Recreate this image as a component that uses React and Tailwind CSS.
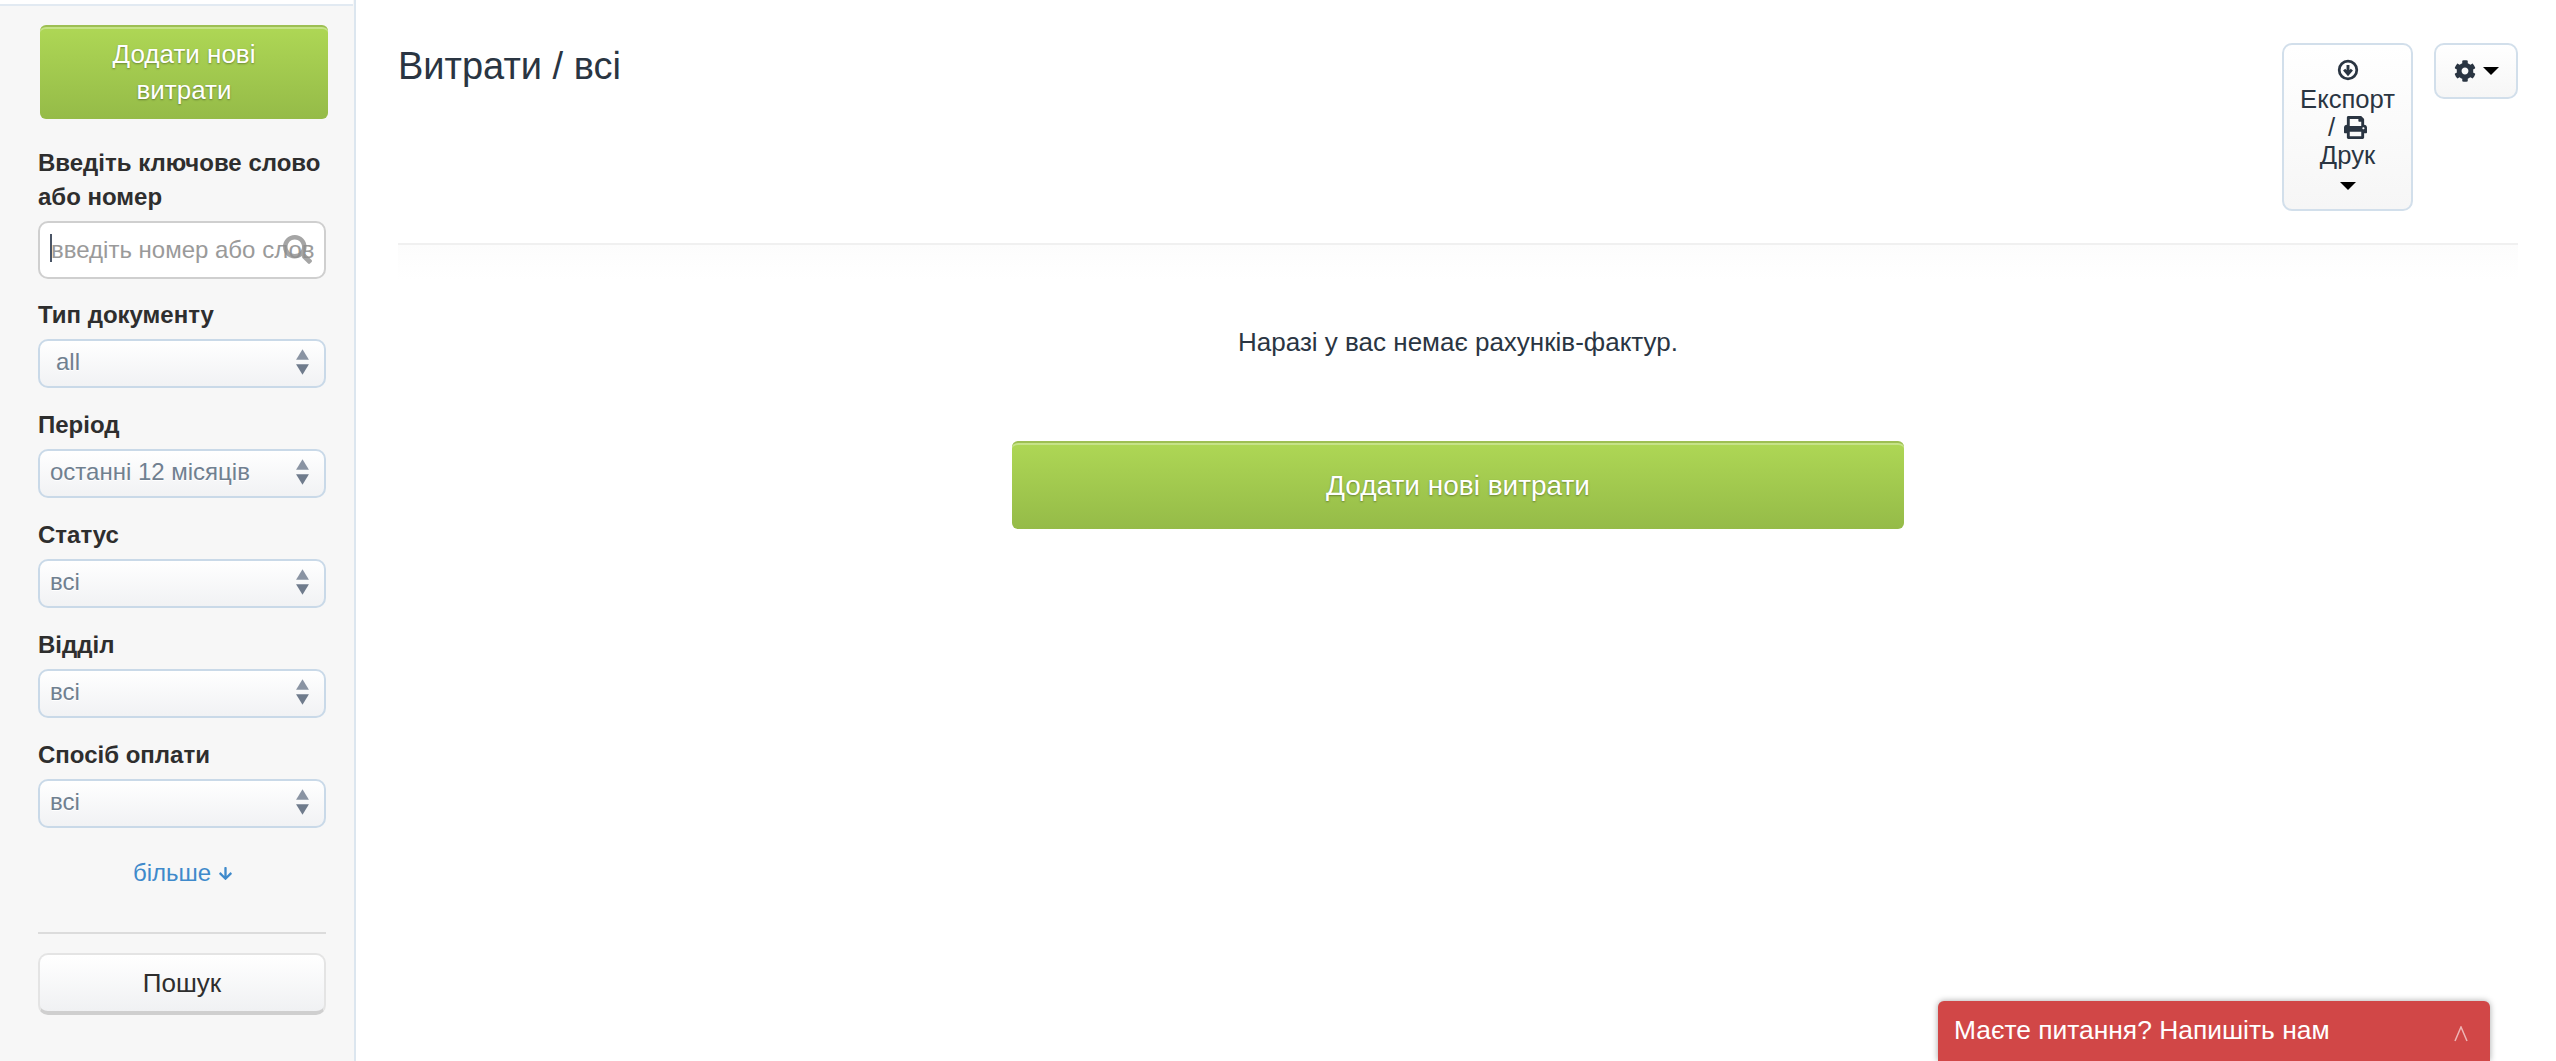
import React from 'react';
import { FaCog, FaPrint, FaArrowDown, FaSearch } from 'react-icons/fa';

const greenBtn =
  'rounded-[6px] border-t-2 border-[#9dbf53] bg-gradient-to-b from-[#aed755] to-[#95bb48] shadow-[inset_0_2px_0_rgba(255,255,255,0.3)] text-white text-[26px] [text-shadow:0_1px_2px_rgba(0,0,0,0.35)]';

const CircleDown = () => (
  <svg viewBox="0 0 24 24" className="w-[22px] h-[22px]" fill="none">
    <circle cx="12" cy="12" r="9.6" stroke="currentColor" strokeWidth="3" />
    <path d="M12 6.5v9M7.8 11.6 12 16.4l4.2-4.8" stroke="currentColor" strokeWidth="3.2" />
  </svg>
);

const Caret = () => (
  <span className="inline-block w-0 h-0 border-x-[8px] border-x-transparent border-t-[8px] border-t-black" />
);

const SelectField = ({ label, value, pad = 'pl-[10px]', mt = 'mt-[20px]' }) => (
  <div className={mt}>
    <label className="block text-[24px] leading-[34px] font-bold text-[#2e2e2e]">{label}</label>
    <div className="relative mt-[7px] h-[49px]">
      <select
        defaultValue={value}
        className={`w-full h-full appearance-none rounded-[10px] border-2 border-[#c9d9e8] bg-gradient-to-b from-white to-[#f1f2f4] ${pad} pb-[4px] text-[24px] text-[#708090] [text-shadow:0_1px_0_#fff] outline-none`}
      >
        <option>{value}</option>
      </select>
      <svg viewBox="0 0 14 26" className="absolute right-[16px] top-[9px] w-[15px] h-[28px] pointer-events-none">
        <path d="M7 1 13 11H1z" fill="#8a94a3" />
        <path d="M1 15h12L7 25z" fill="#6f7b8c" />
      </svg>
    </div>
  </div>
);

export default function App() {
  return (
    <div className="relative flex h-[1061px] overflow-hidden bg-white font-['Liberation_Sans',Arial,sans-serif]">
      <aside className="w-[356px] shrink-0 border-r-2 border-[#dce6ef] bg-[#f7f7f7]">
        <div className="h-[6px] w-[353px] border-b-2 border-[#e2eaf2] bg-white" />
        <div className="pl-[38px] pr-[28px] pt-[19px]">
          <button className={`${greenBtn} block w-[288px] ml-[2px] h-[94px] px-[40px] pb-[2px] leading-[36px]`}>
            Додати нові витрати
          </button>

          <label className="block mt-[27px] text-[24px] leading-[34px] font-bold text-[#2e2e2e]">
            Введіть ключове слово або номер
          </label>
          <div className="relative mt-[7px] h-[58px]">
            <input
              type="text"
              placeholder="введіть номер або слово"
              className="w-full h-full rounded-[10px] border-2 border-[#cfcfcf] bg-white pl-[11px] pr-[10px] text-[24px] placeholder:text-[#9a9a9a] outline-none"
            />
            <span className="absolute left-[12px] top-[13px] h-[28px] w-[2px] bg-[#4a5566]" />
            <FaSearch className="absolute left-[245px] top-[14px] w-[29px] h-[29px] text-[#8f8f8f] opacity-80" />
          </div>

          <SelectField label="Тип документу" value="all" pad="pl-[16px]" mt="mt-[19px]" />
          <SelectField label="Період" value="останні 12 місяців" />
          <SelectField label="Статус" value="всі" />
          <SelectField label="Відділ" value="всі" />
          <SelectField label="Спосіб оплати" value="всі" />

          <a className="mt-[28px] ml-[2px] flex items-center justify-center gap-[7px] text-[24px] leading-[34px] text-[#3f8acb]">
            більше <FaArrowDown className="w-[15px] h-[15px]" />
          </a>

          <hr className="mt-[42px] border-t-2 border-[#dcdcdc]" />

          <button className="mt-[19px] w-full h-[62px] rounded-[10px] border-2 border-[#e4e4e4] border-b-[4px] border-b-[#cfcfcf] bg-gradient-to-b from-white to-[#f0f1f3] text-[26px] text-[#2e2e2e]">
            Пошук
          </button>
        </div>
      </aside>

      <main className="flex-1 pl-[42px] pr-[38px] pt-[43px] text-[#2a3542]">
        <div className="flex items-start justify-between h-[200px]">
          <h1 className="pt-[1px] text-[38px] leading-[44px] font-normal">Витрати / всі</h1>
          <div className="flex items-start gap-[21px]">
            <button className="flex flex-col items-center w-[131px] h-[168px] pt-[14px] rounded-[10px] border-2 border-[#d2dfeb] bg-gradient-to-b from-white to-[#f6f6f6] text-[25.6px] leading-[28px]">
              <CircleDown />
              <span className="mt-[4px]">Експорт</span>
              <span className="flex items-center gap-[9px]">/ <FaPrint className="w-[23px] h-[23px]" /></span>
              <span>Друк</span>
              <span className="mt-[13px] flex"><Caret /></span>
            </button>
            <button className="flex items-center justify-center gap-[7px] w-[84px] h-[56px] rounded-[10px] border-2 border-[#d2dfeb] bg-gradient-to-b from-white to-[#f6f6f6]">
              <FaCog className="w-[22px] h-[22px]" />
              <Caret />
            </button>
          </div>
        </div>

        <section className="h-[287px] border-t-2 border-[#f0f0f0] bg-gradient-to-b from-[#fcfcfc] to-white to-[12%] text-center">
          <p className="pt-[78px] text-[26px] leading-[38px]">Наразі у вас немає рахунків-фактур.</p>
          <button className={`${greenBtn} mt-[80px] w-[892px] h-[88px] text-[28px]`}>Додати нові витрати</button>
        </section>
      </main>

      <div className="absolute left-[1938px] top-[1001px] flex h-[60px] w-[552px] items-start justify-between rounded-t-[6px] bg-[#d14747] pl-[16px] pr-[22px] pt-[13px] text-[26.4px] leading-[32px] text-white shadow-[0_0_6px_rgba(0,0,0,0.35)]">
        <span>Маєте питання? Напишіть нам</span>
        <svg viewBox="0 0 14 16" className="mt-[12px] w-[14px] h-[16px]" fill="none">
          <path d="M1 15 7 1l6 14" stroke="#eeb5b5" strokeWidth="1.5" />
        </svg>
      </div>
    </div>
  );
}
